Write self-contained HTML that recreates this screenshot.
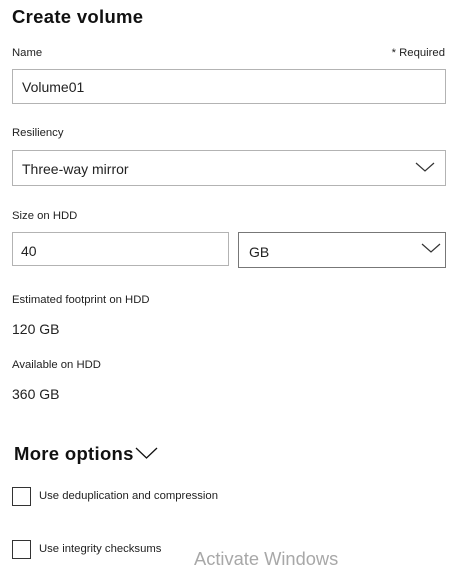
<!DOCTYPE html>
<html><head><style>
body{margin:0;width:459px;height:571px;background:#fff;font-family:"Liberation Sans",sans-serif;color:#111;position:relative;overflow:hidden}
.a{position:absolute;white-space:nowrap}
.box{position:absolute;border:1px solid #b3b3b3;box-sizing:border-box;background:#fff}
.lbl{font-size:11.3px;color:#222}
.val{font-size:14px;color:#222}
.cb{position:absolute;width:19px;height:19px;border:1px solid #333;box-sizing:border-box}
</style></head><body>
<div class="a" style="left:12px;top:6px;font-size:18.5px;font-weight:bold;letter-spacing:0.3px">Create volume</div>
<div class="a lbl" style="left:12px;top:47px">Name</div>
<div class="a lbl" style="right:14px;top:47px">* Required</div>
<div class="box" style="left:12px;top:69px;width:434px;height:35px"></div>
<div class="a val" style="left:22px;top:79px">Volume01</div>
<div class="a lbl" style="left:12px;top:127px">Resiliency</div>
<div class="box" style="left:12px;top:150px;width:434px;height:36px"></div>
<div class="a val" style="left:22px;top:161px">Three-way mirror</div>
<svg class="a" style="left:415px;top:161px" width="20" height="12"><path d="M1 2 L10 10 L19 2" fill="none" stroke="#333" stroke-width="1.2"/></svg>
<div class="a lbl" style="left:12px;top:210px">Size on HDD</div>
<div class="box" style="left:12px;top:232px;width:217px;height:34px"></div>
<div class="a val" style="left:21px;top:243px">40</div>
<div class="box" style="left:238px;top:232px;width:208px;height:36px;border-color:#777"></div>
<div class="a val" style="left:249px;top:244px">GB</div>
<svg class="a" style="left:421px;top:242px" width="20" height="12"><path d="M1 2 L10 10 L19 2" fill="none" stroke="#333" stroke-width="1.2"/></svg>
<div class="a lbl" style="left:12px;top:294px">Estimated footprint on HDD</div>
<div class="a val" style="left:12px;top:321px">120 GB</div>
<div class="a lbl" style="left:12px;top:359px">Available on HDD</div>
<div class="a val" style="left:12px;top:386px">360 GB</div>
<div class="a" style="left:14px;top:443px;font-size:18.5px;font-weight:bold;letter-spacing:0.3px">More options</div>
<svg class="a" style="left:135px;top:446px" width="24" height="14"><path d="M1 2 L11.5 12 L22 2" fill="none" stroke="#111" stroke-width="1.3"/></svg>
<div class="cb" style="left:12px;top:487px"></div>
<div class="a lbl" style="left:39px;top:490px">Use deduplication and compression</div>
<div class="cb" style="left:12px;top:540px"></div>
<div class="a lbl" style="left:39px;top:543px">Use integrity checksums</div>
<div class="a" style="left:194px;top:548px;font-size:18.3px;color:#a8a8a8">Activate Windows</div>
</body></html>
